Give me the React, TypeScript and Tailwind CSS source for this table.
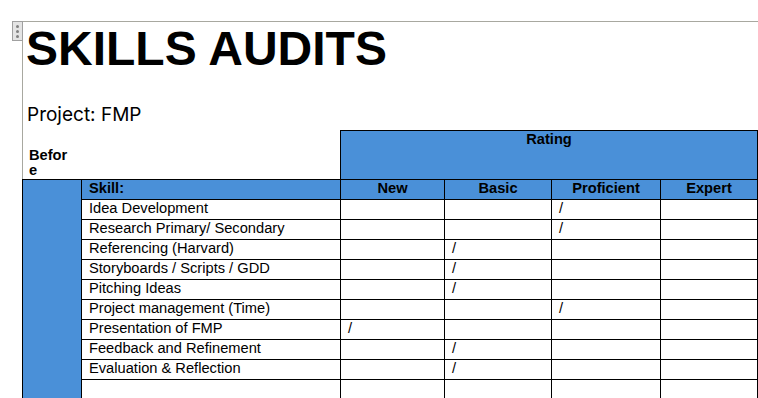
const skills: { name: string; rating: number }[] = [
  { name: "Idea Development", rating: 2 },
  { name: "Research Primary/ Secondary", rating: 2 },
  { name: "Referencing (Harvard)", rating: 1 },
  { name: "Storyboards / Scripts / GDD", rating: 1 },
  { name: "Pitching Ideas", rating: 1 },
  { name: "Project management (Time)", rating: 2 },
  { name: "Presentation of FMP", rating: 0 },
  { name: "Feedback and Refinement", rating: 1 },
  { name: "Evaluation & Reflection", rating: 1 },
  { name: "", rating: -1 },
];

const levels = ["New", "Basic", "Proficient", "Expert"];
const levelWidths = ["w-[104px]", "w-[107px]", "w-[109px]", "w-[98px] border-r"];

const App = () => {
  return (
    <div className="bg-white w-[758px] h-[398px] overflow-hidden pt-[21px] pl-[22px] font-['Liberation_Sans',Arial,sans-serif] text-black">
      <div className="relative h-[400px] border-t border-l border-[#a8a8a0]">
        <div className="absolute -left-[11px] -top-[1px] w-[11px] h-[20px] border border-[#a0a0a0] bg-[#e4e4e4] flex flex-col items-center justify-center gap-[2px]">
          <span className="w-[3px] h-[3px] rounded-full bg-[#808080]" />
          <span className="w-[3px] h-[3px] rounded-full bg-[#808080]" />
          <span className="w-[3px] h-[3px] rounded-full bg-[#808080]" />
        </div>

        <h1 className="mt-[1px] pl-[3px] text-[48px] leading-[52px] font-bold">
          SKILLS AUDITS
        </h1>
        <p className="mt-[28px] pl-[4px] text-[19px] leading-[24px] font-['Inter',sans-serif]">
          Project: FMP
        </p>

        <div className="mt-[3px] -ml-[1px] text-[14.67px] leading-[17px]">
          <div className="flex h-[49px]">
            <div className="w-[318px] pl-[7px] pt-[18px]">
              <div className="w-[40px] break-all font-bold leading-[15px]">Before</div>
            </div>
            <div className="w-[418px] h-[50px] border border-black bg-[#4a90d8] text-center font-bold">
              Rating
            </div>
          </div>

          <div className="flex h-[20px] bg-[#4a90d8] font-bold">
            <div className="w-[59px] border-l border-t border-black" />
            <div className="w-[259px] border-l border-t border-black px-[7px]">Skill:</div>
            {levels.map((l, i) => (
              <div key={l} className={`${levelWidths[i]} border-l border-t border-black text-center`}>
                {l}
              </div>
            ))}
          </div>

          {skills.map((s, r) => (
            <div key={r} className="flex h-[20px]">
              <div className="w-[59px] border-l border-black bg-[#4a90d8]" />
              <div className="w-[259px] border-l border-t border-black px-[7px]">{s.name}</div>
              {levels.map((l, i) => (
                <div key={l} className={`${levelWidths[i]} border-l border-t border-black px-[7px]`}>
                  {s.rating === i ? "/" : ""}
                </div>
              ))}
            </div>
          ))}
        </div>
      </div>
    </div>
  );
};

export default App;
